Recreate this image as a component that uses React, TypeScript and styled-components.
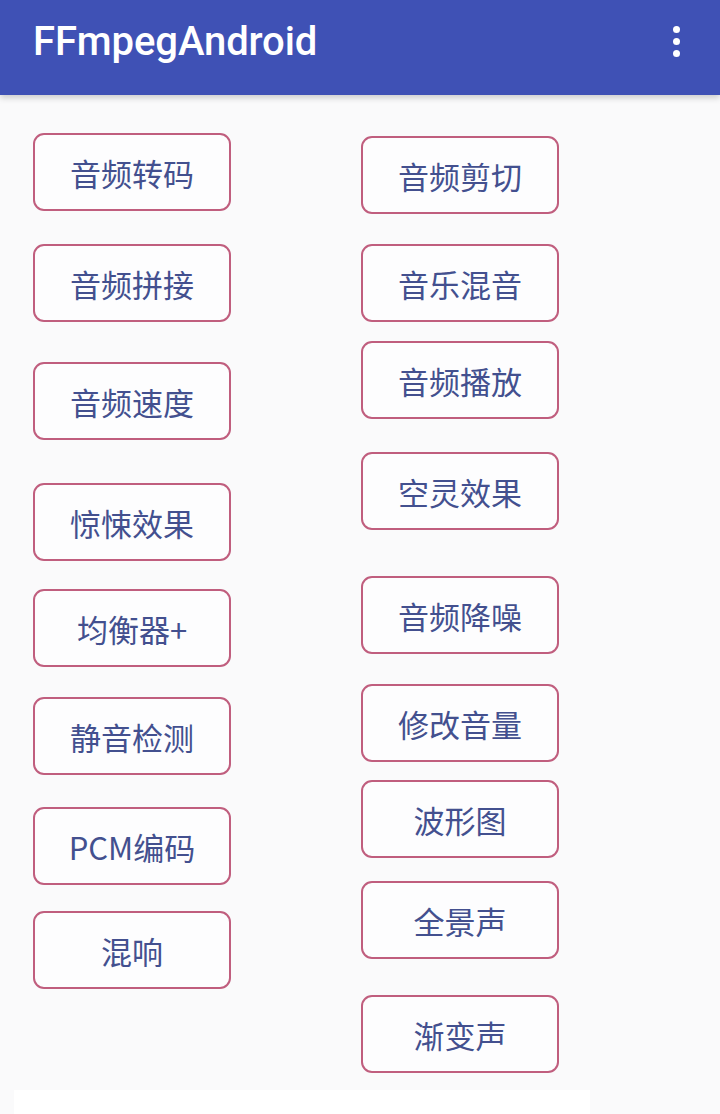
import * as React from 'react';
import styled, { createGlobalStyle } from 'styled-components';

interface Item {
  label: string;
  gap: number;
}

const leftItems: Item[] = [
  { label: '音频转码', gap: 38 },
  { label: '音频拼接', gap: 33 },
  { label: '音频速度', gap: 40 },
  { label: '惊悚效果', gap: 43 },
  { label: '均衡器+', gap: 28 },
  { label: '静音检测', gap: 30 },
  { label: 'PCM编码', gap: 32 },
  { label: '混响', gap: 26 },
];

const rightItems: Item[] = [
  { label: '音频剪切', gap: 41 },
  { label: '音乐混音', gap: 30 },
  { label: '音频播放', gap: 19 },
  { label: '空灵效果', gap: 33 },
  { label: '音频降噪', gap: 46 },
  { label: '修改音量', gap: 30 },
  { label: '波形图', gap: 18 },
  { label: '全景声', gap: 23 },
  { label: '渐变声', gap: 36 },
];

const GlobalStyle = createGlobalStyle`
  html, body {
    margin: 0;
    padding: 0;
    background: #fafafb;
  }
  body {
    font-family: Roboto, "Noto Sans CJK SC", sans-serif;
  }
`;

const Page = styled.div`
  width: 720px;
  height: 1114px;
  overflow: hidden;
  display: flex;
  flex-direction: column;
  background: #fafafb;
`;

const AppBar = styled.header`
  height: 95px;
  flex-shrink: 0;
  display: flex;
  align-items: center;
  justify-content: space-between;
  padding: 0 40px 0 33px;
  box-sizing: border-box;
  background: #3f51b5;
  box-shadow: 0 3px 6px rgba(0, 0, 0, 0.18);
  position: relative;
  z-index: 1;
`;

const Title = styled.h1`
  margin: 0 0 12px;
  font-family: Roboto, sans-serif;
  font-weight: 500;
  font-size: 40px;
  letter-spacing: -0.1px;
  color: #ffffff;
`;

const MenuButton = styled.div`
  display: flex;
  flex-direction: column;
  gap: 5px;
  margin-bottom: 12px;
`;

const Dot = styled.span`
  width: 7px;
  height: 7px;
  border-radius: 50%;
  background: #ffffff;
`;

const Content = styled.main`
  display: flex;
  padding-left: 33px;
  gap: 130px;
`;

const Column = styled.div`
  display: flex;
  flex-direction: column;
`;

const ActionButton = styled.button<{ $gap: number }>`
  margin-top: ${p => p.$gap}px;
  width: 198px;
  height: 78px;
  padding: 0;
  box-sizing: border-box;
  border: 2px solid #c05e7e;
  border-radius: 11px;
  background: #fdfdfe;
  color: #43508f;
  font-family: "Noto Sans CJK SC", "Noto Sans", sans-serif;
  font-size: 31px;
  font-weight: 400;
  display: flex;
  align-items: center;
  justify-content: center;
`;

const Footer = styled.div`
  margin: 17px 0 0 14px;
  width: 576px;
  height: 40px;
  flex-shrink: 0;
  background: #ffffff;
`;

const ButtonColumn = ({ items }: { items: Item[] }) => (
  <Column>
    {items.map(item => (
      <ActionButton key={item.label} $gap={item.gap}>
        {item.label}
      </ActionButton>
    ))}
  </Column>
);

export default function App() {
  return (
    <Page>
      <GlobalStyle />
      <AppBar>
        <Title>FFmpegAndroid</Title>
        <MenuButton>
          <Dot />
          <Dot />
          <Dot />
        </MenuButton>
      </AppBar>
      <Content>
        <ButtonColumn items={leftItems} />
        <ButtonColumn items={rightItems} />
      </Content>
      <Footer />
    </Page>
  );
}
